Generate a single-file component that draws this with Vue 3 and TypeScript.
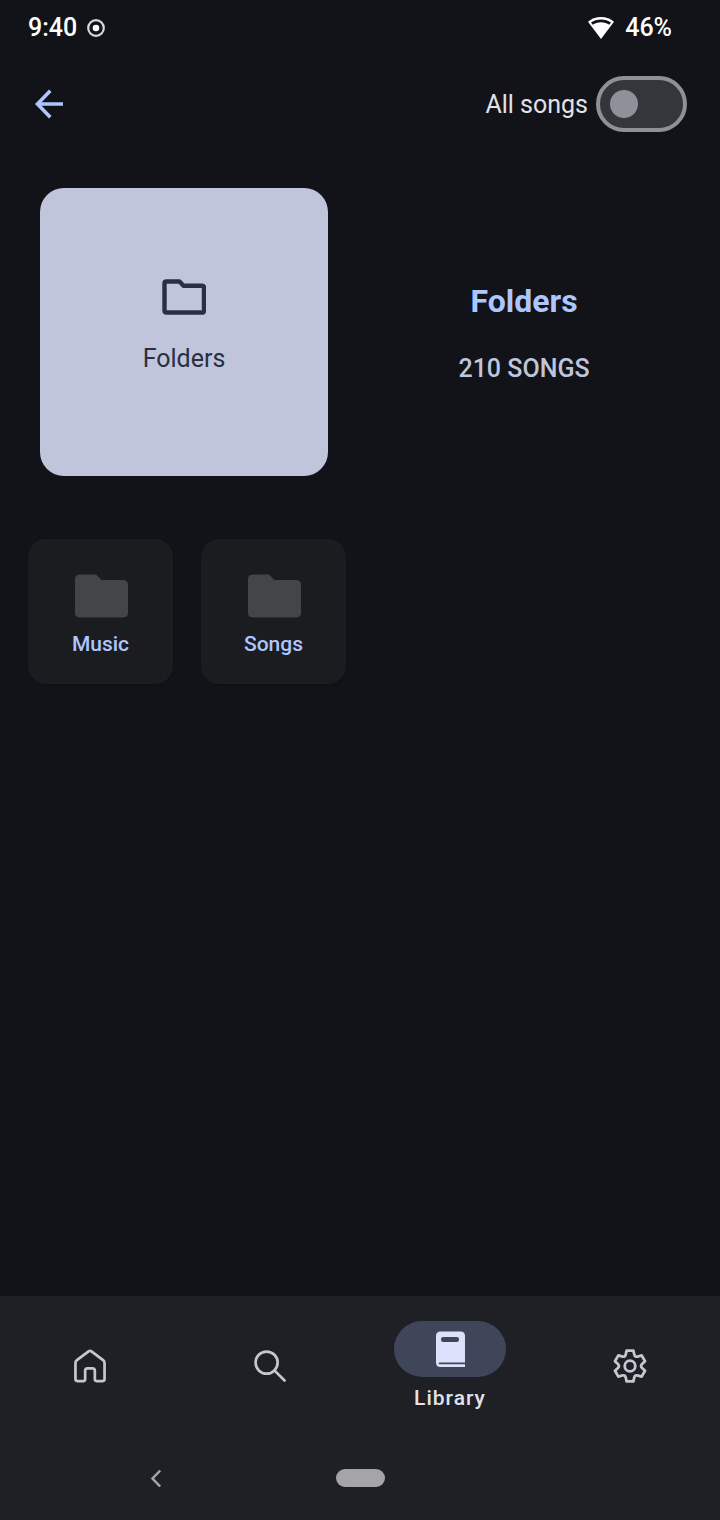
<script setup lang="ts">
import { ref } from 'vue'

interface Folder {
  id: number
  name: string
}

const allSongs = ref(false)
const songCount = 210
const folders: Folder[] = [
  { id: 1, name: 'Music' },
  { id: 2, name: 'Songs' },
]

function gearPath(): string {
  const rotate = (x: number, y: number, step: number): string => {
    const a = (step * Math.PI) / 3
    const rx = x * Math.cos(a) - y * Math.sin(a)
    const ry = x * Math.sin(a) + y * Math.cos(a)
    return `${rx.toFixed(2)} ${ry.toFixed(2)}`
  }
  let d = ''
  for (let i = 0; i < 6; i++) {
    d += `${i === 0 ? 'M' : 'L'}${rotate(-3.4, -15.4, i)}`
    d += `L${rotate(3.4, -15.4, i)}L${rotate(4.2, -11.8, i)}`
    d += `Q${rotate(4.9, -8.5, i)} ${rotate(-4.2, -11.8, i + 1)}`
  }
  return d + 'Z'
}

const gear = gearPath()
</script>

<template>
  <div class="screen">
    <header class="status">
      <span class="status-side">
        <span>9:40</span>
        <svg width="20" height="20" viewBox="0 0 20 20" aria-hidden="true">
          <circle cx="10" cy="10" r="7.8" fill="none" stroke="#d8d8da" stroke-width="2.2" />
          <circle cx="10" cy="10" r="3.3" fill="#fff" />
        </svg>
      </span>
      <span class="status-side wide">
        <svg width="26" height="22" viewBox="0 0 26 22" aria-hidden="true">
          <path d="M13 0C8 0 3.500 1.800 0 4.800L13 22 26 4.800C22.500 1.800 18 0 13 0Z" fill="#fff" />
          <path d="M3 5.600C5.800 3.500 9.200 2.400 13 2.400s7.200 1.100 10 3.200l-1.700 2.200C19 6.200 16.100 5.200 13 5.200S7 6.200 4.700 7.800Z" fill="#121318" />
        </svg>
        <span>46%</span>
      </span>
    </header>

    <div class="topbar">
      <button class="back" type="button" aria-label="Back">
        <svg width="30" height="30" viewBox="0 0 30 30" fill="none" stroke="#adc6ff" stroke-width="3.6" aria-hidden="true">
          <path d="M16.300 1.800 3.500 15 16.300 28.200M3.500 15H29" />
        </svg>
      </button>
      <label class="toggle">
        <span>All songs</span>
        <input v-model="allSongs" type="checkbox" role="switch" />
      </label>
    </div>

    <main>
      <section class="hero">
        <div class="cover">
          <svg width="44" height="36" viewBox="0 0 44 36" fill="none" stroke="#2a3042" stroke-width="4.400" stroke-linejoin="round" aria-hidden="true">
            <path d="M4 2.500H17.500L21.500 6.800H40Q42 6.800 42 8.800V31.500Q42 33.500 40 33.500H4.500Q2.500 33.500 2.500 31.500V4.500Q2.500 2.500 4.500 2.500Z" />
          </svg>
          <span>Folders</span>
        </div>
        <div class="info">
          <h1>Folders</h1>
          <p>{{ songCount }} SONGS</p>
        </div>
      </section>

      <section class="grid" aria-label="Folders">
        <button v-for="folder in folders" :key="folder.id" class="folder" type="button">
          <svg width="54" height="44" viewBox="0 0 54 44" aria-hidden="true">
            <path d="M6 .5H22L27.500 6H49Q54 6 54 11V38.500Q54 43.500 49 43.500H6Q1 43.500 1 38.500V5.500Q1 .5 6 .5Z" fill="#444548" />
          </svg>
          <span>{{ folder.name }}</span>
        </button>
      </section>
    </main>

    <footer class="bottom">
      <nav class="nav" aria-label="Main">
        <button type="button" aria-label="Home">
          <svg width="32" height="34" viewBox="0.5 1 33 34" fill="none" stroke="#c5c6d0" stroke-width="2.800" stroke-linejoin="round" aria-hidden="true">
            <path d="M15.500 3 3.500 12Q2 13.200 2 15V31.500Q2 33.500 4 33.500H10.500Q12 33.500 12 31.500V23Q12 20.500 14.500 20.500H19.500Q22 20.500 22 23V31.500Q22 33.500 23.500 33.500H30Q32 33.500 32 31.500V15Q32 13.200 30.500 12L18.500 3Q17 1.900 15.500 3Z" />
          </svg>
        </button>
        <button type="button" aria-label="Search">
          <svg width="32" height="32" viewBox="0.5 0.5 33 33" fill="none" stroke="#c5c6d0" stroke-width="2.800" stroke-linecap="round" aria-hidden="true">
            <circle cx="13.500" cy="13.500" r="11.400" />
            <path d="M21.800 21.800 32 32" />
          </svg>
        </button>
        <button type="button" aria-current="page">
          <span class="pill">
            <svg width="30" height="36" viewBox="0 0 30 36" aria-hidden="true">
              <path d="M5.500.5H25.500Q30 .5 30 5V31.500H5Q3.500 31.500 3.500 32.300T5 33.200H30V36H5.500Q1 36 1 31.500V5Q1 .5 5.500.5Z" fill="#dce1fc" />
              <rect x="6" y="6" width="18" height="5" rx="2.200" fill="#404659" />
            </svg>
          </span>
          <span class="nav-label">Library</span>
        </button>
        <button type="button" aria-label="Settings">
          <svg width="36" height="36" viewBox="-18 -18 36 36" fill="none" stroke="#c5c6d0" stroke-width="2.800" stroke-linejoin="round" aria-hidden="true">
            <path :d="gear" />
            <circle r="5.300" />
          </svg>
        </button>
      </nav>
      <div class="system">
        <button type="button" aria-label="System back">
          <svg width="12" height="18" viewBox="0 0 12 18" fill="none" stroke="#a5a5a7" stroke-width="2.500" aria-hidden="true">
            <path d="M10.200 1.500 2.500 9.500l7.700 8" />
          </svg>
        </button>
        <button type="button" aria-label="System home"><span class="handle"></span></button>
      </div>
    </footer>
  </div>
</template>

<style>
body {
  margin: 0;
  background: #121318;
}
</style>

<style scoped>
.screen {
  display: flex;
  flex-direction: column;
  min-height: 100vh;
  background: #121318;
  color: #e2e2e9;
  font-family: Roboto, "Noto Sans", sans-serif;
}

button {
  margin: 0;
  padding: 0;
  border: 0;
  background: none;
  color: inherit;
  font: inherit;
  cursor: pointer;
}

svg {
  display: block;
  flex: none;
}

.status {
  display: flex;
  justify-content: space-between;
  align-items: center;
  height: 55px;
  padding: 0 48px 0 28px;
  color: #fff;
  font-size: 25px;
  font-weight: 500;
}

.status-side {
  display: flex;
  align-items: center;
  gap: 9px;
}

.status-side.wide {
  gap: 11px;
}

.topbar {
  display: flex;
  justify-content: space-between;
  align-items: center;
  height: 98px;
  padding: 0 33px 0 34px;
}

.toggle {
  display: flex;
  align-items: center;
  gap: 8px;
  font-size: 25px;
  cursor: pointer;
}

.toggle input {
  appearance: none;
  display: flex;
  align-items: center;
  box-sizing: border-box;
  width: 91px;
  height: 56px;
  margin: 0;
  padding: 0 10px;
  border: 4px solid #8f9099;
  border-radius: 28px;
  background: #35363b;
}

.toggle input::before {
  content: "";
  width: 28px;
  height: 28px;
  border-radius: 50%;
  background: #8f9099;
}

.toggle input:checked {
  justify-content: flex-end;
}

main {
  flex: 1;
  padding-top: 35px;
}

.hero {
  display: flex;
  align-items: center;
  padding-left: 40px;
}

.cover {
  display: flex;
  flex-direction: column;
  align-items: center;
  justify-content: center;
  gap: 28px;
  box-sizing: border-box;
  width: 288px;
  padding-bottom: 10px;
  aspect-ratio: 1;
  border-radius: 24px;
  background: #c0c5dc;
  color: #2a3042;
  font-size: 25px;
  line-height: 32px;
}

.info {
  flex: 1;
  padding-top: 2px;
  text-align: center;
}

h1 {
  margin: 0 0 32px;
  color: #adc6ff;
  font-size: 32px;
  line-height: 40px;
  font-weight: 700;
}

.info p {
  margin: 0;
  color: #bfc6dc;
  font-size: 25px;
  line-height: 32px;
  font-weight: 500;
}

.grid {
  display: grid;
  grid-template-columns: repeat(4, 1fr);
  gap: 28px;
  padding: 63px 28px 28px;
}

.folder {
  display: flex;
  flex-direction: column;
  align-items: center;
  justify-content: center;
  gap: 12px;
  box-sizing: border-box;
  padding-top: 8px;
  aspect-ratio: 1;
  border-radius: 18px;
  background: #1b1c20;
  box-shadow: 0 1px 2px #0f1014;
  color: #adc6ff;
  font-size: 21px;
  line-height: 28px;
  font-weight: 500;
}

.bottom {
  background: #1e2025;
}

.nav {
  display: grid;
  grid-template-columns: repeat(4, 1fr);
  height: 140px;
}

.nav button {
  display: flex;
  flex-direction: column;
  align-items: center;
  justify-content: center;
  gap: 7px;
}

.pill {
  display: flex;
  align-items: center;
  justify-content: center;
  width: 112px;
  height: 56px;
  border-radius: 28px;
  background: #404659;
}

.nav-label {
  color: #e2e2e9;
  font-size: 21px;
  line-height: 28px;
  font-weight: 500;
  letter-spacing: 1px;
}

.system {
  display: grid;
  grid-template-columns: repeat(3, 1fr);
  height: 84px;
  padding: 0 54px;
}

.system button {
  display: flex;
  align-items: center;
  justify-content: center;
}

.handle {
  width: 49px;
  height: 18px;
  border-radius: 9px;
  background: #a5a5a7;
}
</style>
